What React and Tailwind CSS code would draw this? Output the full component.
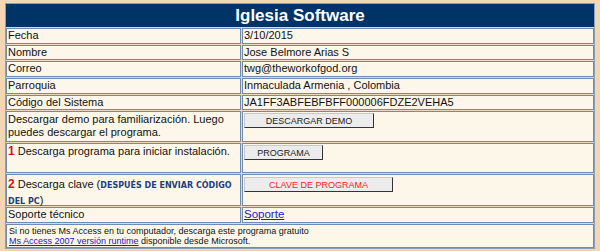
import React from "react";

const rows = [
  { label: "Fecha", value: "3/10/2015", h: "h-[16px]" },
  { label: "Nombre", value: "Jose Belmore Arias S", h: "h-[15px]" },
  { label: "Correo", value: "twg@theworkofgod.org", h: "h-[16px]" },
  { label: "Parroquia", value: "Inmaculada Armenia , Colombia", h: "h-[16px]" },
  { label: "Código del Sistema", value: "JA1FF3ABFEBFBFF000006FDZE2VEHA5", h: "h-[15px]" },
];

function Boton({ children, width, red }) {
  return (
    <button
      className={
        "h-[15px] bg-[#ececec] border border-t-[#c8c8c8] border-l-[#c8c8c8] border-r-[#333] border-b-[#333] text-[9px] leading-[12px] font-['Liberation_Sans',Arial,sans-serif] " +
        (red ? "text-[#ff2020]" : "text-[#222]")
      }
      style={{ width }}
    >
      {children}
    </button>
  );
}

function Row({ left, right, h = "h-[16px]" }) {
  return (
    <div className={`flex gap-px ${h}`}>
      <div className="w-[235px] shrink-0 border border-[#6f8cae] bg-[#fdf7ea] px-px leading-[13px]">
        {left}
      </div>
      <div className="flex-1 border border-[#6f8cae] bg-[#fdf7ea] px-px leading-[13px]">
        {right}
      </div>
    </div>
  );
}

export default function App() {
  return (
    <div className="w-[600px] h-[251px] bg-[#f3d6b2] pt-[3px] px-[5px] font-['Liberation_Sans',Arial,sans-serif] text-[11px] text-[#111]">
      <div className="flex flex-col gap-px bg-[#e6d8c3] border border-[#8aa0b8]">
        <div className="h-[23px] bg-[#003366] text-white text-[17px] font-bold flex items-center justify-center leading-none">
          Iglesia Software
        </div>
        {rows.map((r) => (
          <Row key={r.label} h={r.h} left={r.label} right={r.value} />
        ))}
        <Row
          h="h-[31px]"
          left={
            <span className="block pt-px leading-[13px]">
              Descargar demo para familiarización. Luego
              <br />
              puedes descargar el programa.
            </span>
          }
          right={
            <div className="pt-px">
              <Boton width={130}>DESCARGAR DEMO</Boton>
            </div>
          }
        />
        <Row
          h="h-[30px]"
          left={
            <span className="block pt-px">
              <b className="text-[#e01010] text-[12px]">1</b> Descarga programa para iniciar instalación.
            </span>
          }
          right={
            <div className="pt-px">
              <Boton width={79}>PROGRAMA</Boton>
            </div>
          }
        />
        <Row
          h="h-[32px]"
          left={
            <div className="pt-[2px] leading-[15px]">
              <div className="whitespace-nowrap">
                <b className="text-[#e01010] text-[12px]">2</b> Descarga clave (
                <b className="text-[#1d3f7a] text-[8px] font-['DejaVu_Sans',Verdana,sans-serif] tracking-[0px]">
                  DESPUÉS DE ENVIAR CÓDIGO
                </b>
              </div>
              <div>
                <b className="text-[#1d3f7a] text-[8px] font-['DejaVu_Sans',Verdana,sans-serif]">
                  DEL PC
                </b>
                )
              </div>
            </div>
          }
          right={
            <div className="pt-[2px]">
              <Boton width={149} red>
                CLAVE DE PROGRAMA
              </Boton>
            </div>
          }
        />
        <Row
          left="Soporte técnico"
          right={
            <a href="#" className="text-[#2020c0] underline text-[11.5px]">
              Soporte
            </a>
          }
        />
        <div className="h-[24px] border border-[#6f8cae] bg-[#fdf7ea] px-[2px] pt-px text-[9px] leading-[10px]">
          Si no tienes Ms Access en tu computador, descarga este programa gratuito
          <br />
          <a href="#" className="text-[#2020c0] underline">
            Ms Access 2007 versión runtime
          </a>{" "}
          disponible desde Microsoft.
        </div>
      </div>
    </div>
  );
}
